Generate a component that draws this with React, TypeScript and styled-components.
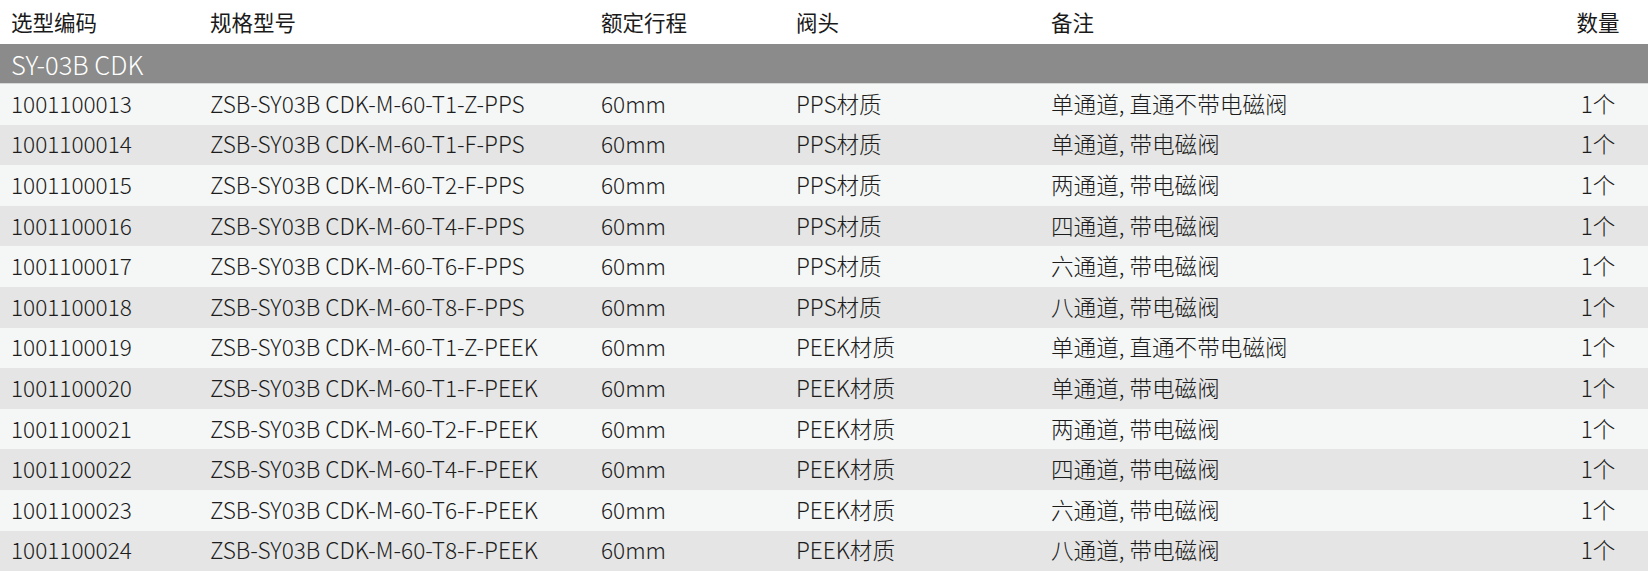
import styled, { createGlobalStyle } from 'styled-components';

const GlobalStyle = createGlobalStyle`
  html, body {
    margin: 0;
    padding: 0;
    background: #fff;
  }
  body {
    font-family: "Noto Sans CJK SC", "Noto Sans", sans-serif;
    font-weight: 300;
    color: #1c1c1c;
  }
`;

const columns = '199px 391px 195px 255px 1fr 100px';

const StyledTable = styled.div`
  width: 1648px;
  display: flex;
  flex-direction: column;
`;

const HeaderRow = styled.div`
  display: grid;
  grid-template-columns: ${columns};
  align-items: center;
  height: 44px;
  padding-bottom: 2px;
  box-sizing: border-box;
  background: #fff;
  font-size: 21.5px;
  font-weight: 400;
  color: #1a1a1a;
`;

const GroupRow = styled.div`
  display: flex;
  align-items: center;
  height: 39px;
  padding: 0 11px;
  background: #8a8b8a;
  border-bottom: 1px solid #d6d8d7;
  color: #fff;
  font-size: 25.5px;
`;

const Row = styled.div<{ $striped: boolean }>`
  display: grid;
  grid-template-columns: ${columns};
  align-items: center;
  height: 40.6px;
  padding-bottom: 2px;
  box-sizing: border-box;
  background: ${(p) => (p.$striped ? '#e4e5e4' : '#f5f7f6')};
  font-size: 22.6px;
`;

const Cell = styled.div<{ $center?: boolean }>`
  padding: 0 11px;
  white-space: nowrap;
  text-align: ${(p) => (p.$center ? 'center' : 'left')};
`;

const headers = ['选型编码', '规格型号', '额定行程', '阀头', '备注', '数量'];

const notes = [
  '单通道, 直通不带电磁阀',
  '单通道, 带电磁阀',
  '两通道, 带电磁阀',
  '四通道, 带电磁阀',
  '六通道, 带电磁阀',
  '八通道, 带电磁阀',
];
const variants = ['T1-Z', 'T1-F', 'T2-F', 'T4-F', 'T6-F', 'T8-F'];

const rows = ['PPS', 'PEEK'].flatMap((mat, m) =>
  variants.map((v, i) => ({
    code: `10011000${String(13 + m * 6 + i).padStart(2, '0')}`,
    model: `ZSB-SY03B CDK-M-60-${v}-${mat}`,
    stroke: '60mm',
    head: `${mat}材质`,
    note: notes[i],
    qty: '1个',
  }))
);

export default function App() {
  return (
    <>
      <GlobalStyle />
      <StyledTable>
        <HeaderRow>
          {headers.map((h, i) => (
            <Cell key={h} $center={i === headers.length - 1}>
              {h}
            </Cell>
          ))}
        </HeaderRow>
        <GroupRow>SY-03B CDK</GroupRow>
        {rows.map((r, i) => (
          <Row key={r.code} $striped={i % 2 === 1}>
            <Cell>{r.code}</Cell>
            <Cell>{r.model}</Cell>
            <Cell>{r.stroke}</Cell>
            <Cell>{r.head}</Cell>
            <Cell>{r.note}</Cell>
            <Cell $center>{r.qty}</Cell>
          </Row>
        ))}
      </StyledTable>
    </>
  );
}
